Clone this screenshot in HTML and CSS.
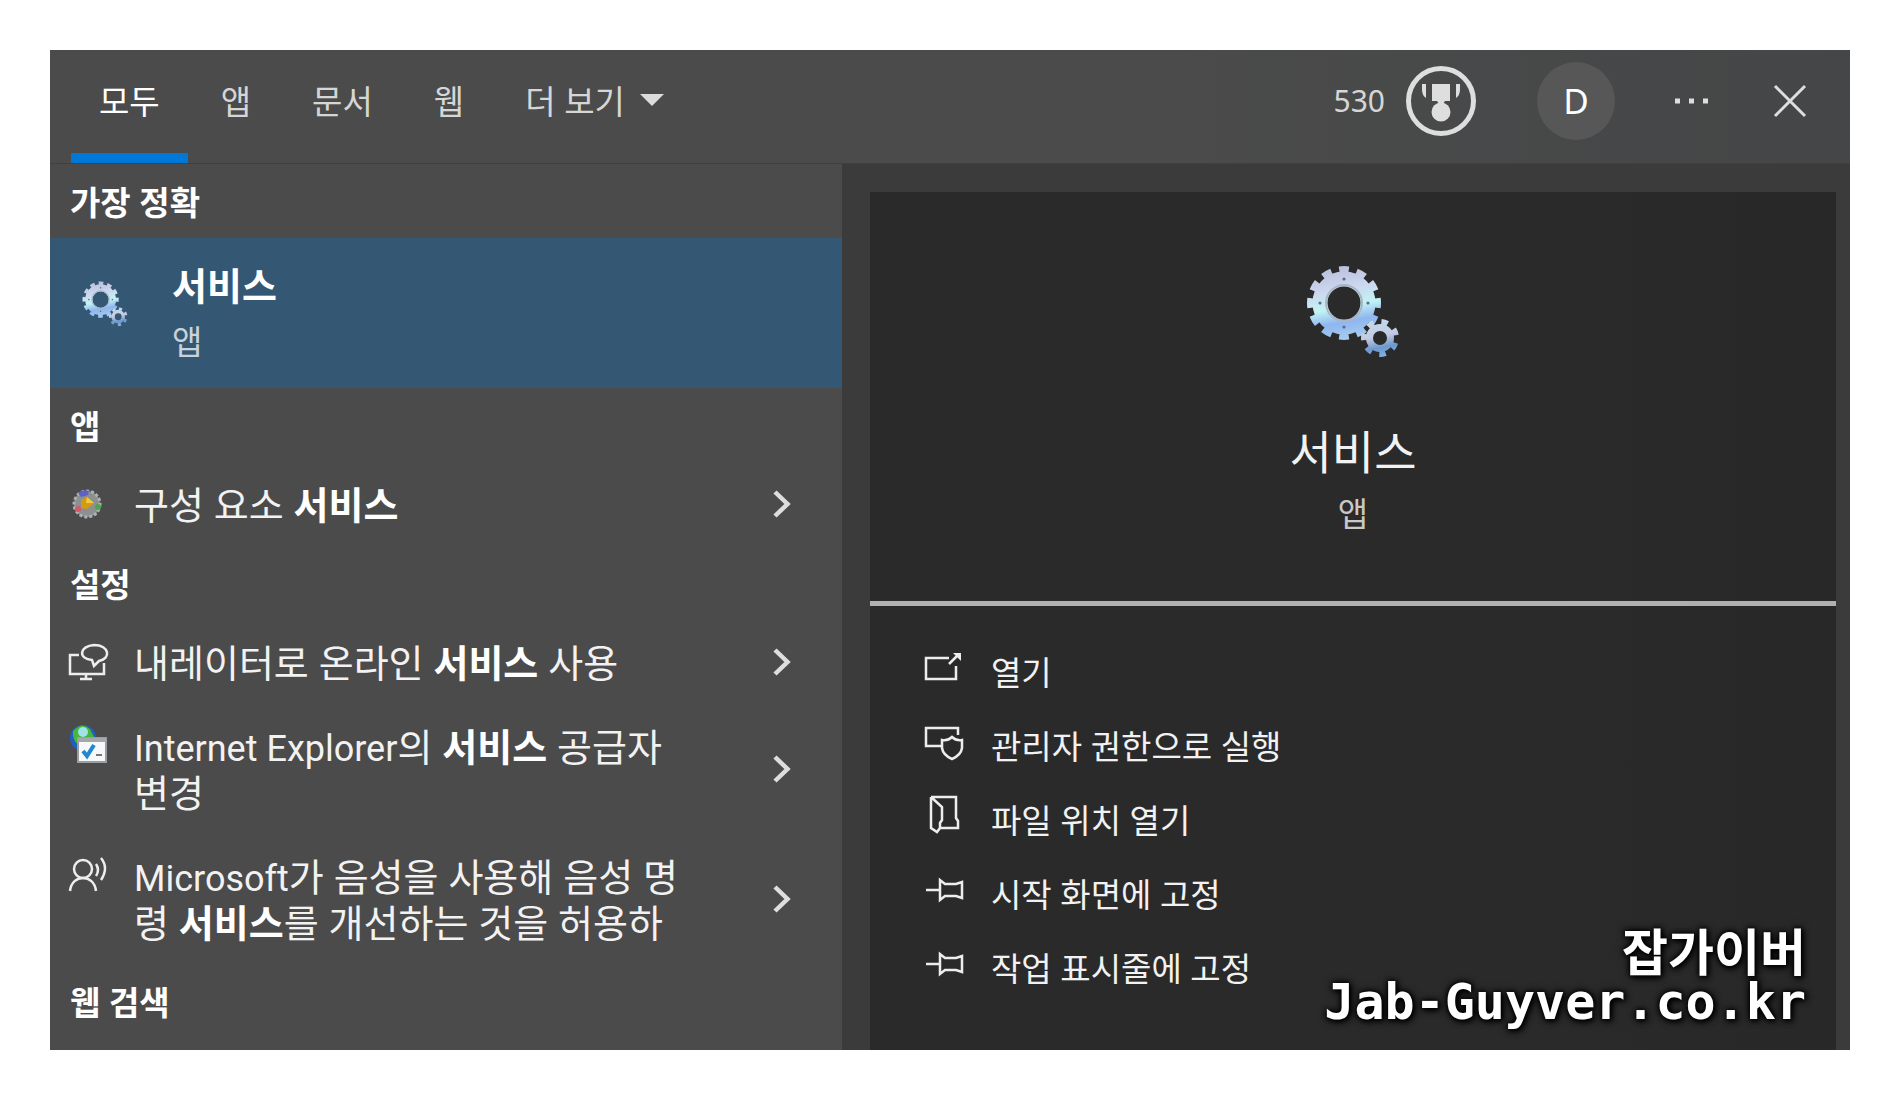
FILE: index.html
```html
<!DOCTYPE html>
<html lang="ko">
<head>
  <meta charset="UTF-8" />
  <title>서비스 - 검색</title>
  <link rel="stylesheet" href="styles.css">
</head>
<body>
  <svg class="defs" aria-hidden="true">
    <defs>
      <linearGradient id="gearFill" gradientUnits="userSpaceOnUse" x1="30" y1="0" x2="44" y2="74">
        <stop offset="0" stop-color="#b9bfdc" />
        <stop offset="0.3" stop-color="#ccd6ee" />
        <stop offset="0.55" stop-color="#c2f3f4" />
        <stop offset="0.75" stop-color="#8fb6f0" />
        <stop offset="1" stop-color="#a8cdee" />
      </linearGradient>
      <linearGradient id="gearSmall" gradientUnits="userSpaceOnUse" x1="70" y1="53" x2="78" y2="91">
        <stop offset="0" stop-color="#c3dcec" />
        <stop offset="0.45" stop-color="#c4cbe2" />
        <stop offset="0.75" stop-color="#6c98cc" />
        <stop offset="1" stop-color="#86b4e4" />
      </linearGradient>
      <symbol id="gears" viewBox="0 0 94 92">
        <g fill="none" stroke="url(#gearFill)">
          <circle cx="38" cy="37" r="24" stroke-width="15" />
          <circle cx="38" cy="37" r="33" stroke-width="8" pathLength="240" stroke-dasharray="11 9" stroke-dashoffset="5.500" />
        </g>
        <circle cx="38" cy="37" r="18" fill="none" stroke="#a9b6c4" stroke-width="2" />
        <g fill="#55708a">
          <circle cx="38" cy="13" r="1.600" />
          <circle cx="38" cy="61" r="1.600" />
          <circle cx="14" cy="37" r="1.600" />
          <circle cx="62" cy="37" r="1.600" />
        </g>
        <g fill="none" stroke="url(#gearSmall)">
          <circle cx="74" cy="72" r="10.500" stroke-width="7" />
          <circle cx="74" cy="72" r="16" stroke-width="6" pathLength="140" stroke-dasharray="9 11" stroke-dashoffset="13" />
        </g>
      </symbol>
      <symbol id="chevron" viewBox="0 0 20 30">
        <path d="M3 3 15.500 15 3 27" fill="none" stroke="#dedede" stroke-width="4.500" />
      </symbol>
      <symbol id="pin" viewBox="0 0 40 40">
        <path d="M1 20H15M15 10V30L20 26H31L37 28V12L31 14H20L15 10Z" fill="none" stroke="#ededed" stroke-width="2.500" />
      </symbol>
    </defs>
  </svg>

  <main class="search-panel">
    <header class="topbar">
      <nav class="tabs">
        <button type="button" class="tab active">모두</button>
        <button type="button" class="tab">앱</button>
        <button type="button" class="tab">문서</button>
        <button type="button" class="tab">웹</button>
        <button type="button" class="tab more">더 보기
          <svg class="caret" viewBox="0 0 26 14" aria-hidden="true"><path d="M1 1H25L13 13Z" fill="#dcdcdc" /></svg>
        </button>
      </nav>
      <div class="account">
        <button type="button" class="rewards">530
          <svg viewBox="0 0 72 72" aria-hidden="true">
            <circle cx="36" cy="36" r="32.500" fill="none" stroke="#dedede" stroke-width="5" />
            <path d="M27 19H45V36H40L38 39H34L32 36H27Z" fill="#dedede" />
            <circle cx="36" cy="47" r="9.500" fill="#dedede" />
            <path d="M17 19H21V33Q17 30 17 25ZM55 19H51V33Q55 30 55 25Z" fill="#dedede" />
          </svg>
        </button>
        <button type="button" class="avatar">D</button>
        <button type="button" class="icon-btn" aria-label="옵션">
          <svg viewBox="0 0 34 34" aria-hidden="true"><path d="M0 14.500H5V19.500H0ZM14 14.500H19V19.500H14ZM28 14.500H33V19.500H28Z" fill="#dedede" /></svg>
        </button>
        <button type="button" class="icon-btn close" aria-label="닫기">
          <svg viewBox="0 0 34 34" aria-hidden="true"><path d="M2 2 32 32M32 2 2 32" stroke="#dedede" stroke-width="3" /></svg>
        </button>
      </div>
    </header>

    <div class="content">
      <section class="results">
        <h2>가장 정확</h2>
        <a href="#" class="best">
          <svg class="best-icon" aria-hidden="true"><use href="#gears" /></svg>
          <span class="best-text"><b>서비스</b><small>앱</small></span>
        </a>

        <h2>앱</h2>
        <a href="#" class="row">
          <svg class="row-icon" viewBox="0 0 38 38" aria-hidden="true">
            <circle cx="17" cy="19" r="13" fill="#8d9090" />
            <circle cx="17" cy="19" r="13" fill="none" stroke="#aeb0b4" stroke-width="3" stroke-dasharray="3 2" />
            <path d="M8 8Q13 4 19 6L18 10L11 12Z" fill="#5c62c8" />
            <circle cx="28" cy="22" r="3" fill="#4da44f" />
            <circle cx="8" cy="24" r="3" fill="#d4586c" />
            <path d="M11 15 17 12 24 18 17 24 11 23Z" fill="#d69a12" />
            <path d="M17 12 24 18 16 18Z" fill="#f1cc42" />
          </svg>
          <span class="row-text">구성 요소 <b>서비스</b></span>
          <svg class="chevron" aria-hidden="true"><use href="#chevron" /></svg>
        </a>

        <h2>설정</h2>
        <a href="#" class="row">
          <svg class="row-icon" viewBox="0 0 38 38" fill="none" stroke="#ededed" stroke-width="2.500" aria-hidden="true">
            <path d="M9 12H0V31H34V20M16 31V36M10 36H22" />
            <path d="M22 17C8 16 9 3 24 2C40 2 41 16 29 18L24 23Z" />
          </svg>
          <span class="row-text">내레이터로 온라인 <b>서비스</b> 사용</span>
          <svg class="chevron" aria-hidden="true"><use href="#chevron" /></svg>
        </a>
        <a href="#" class="row">
          <svg class="row-icon top" viewBox="0 0 38 38" aria-hidden="true">
            <circle cx="13" cy="15" r="13" fill="#1e5fc4" />
            <path d="M3 8Q12 -2 20 6L24 14H12L8 22Q2 16 3 8Z" fill="#49b53b" />
            <circle cx="13" cy="9" r="5" fill="#9fe3ea" />
            <rect x="8" y="15" width="28" height="24" fill="#f6f8fa" stroke="#9a9da1" stroke-width="2" />
            <path d="M8 17H36" stroke="#a4a8ac" stroke-width="4" />
            <path d="M13 28 17 33 24 22" fill="none" stroke="#2387cf" stroke-width="4" />
            <path d="M26 32H32" stroke="#777" stroke-width="2" />
          </svg>
          <span class="row-text"><span lang="en">Internet Explorer</span>의 <b>서비스</b> 공급자 변경</span>
          <svg class="chevron" aria-hidden="true"><use href="#chevron" /></svg>
        </a>
        <a href="#" class="row">
          <svg class="row-icon top" viewBox="0 0 38 38" fill="none" stroke="#ededed" stroke-width="2.500" aria-hidden="true">
            <circle cx="13" cy="16" r="9" />
            <path d="M0 38C1 29 7 25 13 25S25 29 26 38M26 11Q30 17 26 23M31 5Q39 15 31 27" />
          </svg>
          <span class="row-text"><span lang="en">Microsoft</span>가 음성을 사용해 음성 명령 <b>서비스</b>를 개선하는 것을 허용하</span>
          <svg class="chevron" aria-hidden="true"><use href="#chevron" /></svg>
        </a>

        <h2>웹 검색</h2>
      </section>

      <section class="preview">
        <div class="card">
          <div class="summary">
            <svg class="summary-icon" aria-hidden="true"><use href="#gears" /></svg>
            <h1>서비스</h1>
            <p>앱</p>
          </div>
          <ul class="actions">
            <li><a href="#">
              <svg viewBox="0 0 40 40" aria-hidden="true" fill="none" stroke="#ededed" stroke-width="2.500">
                <path d="M24 10H1V31H31V18M24 16 33 7" /><path d="M28 5H36V13Z" fill="#ededed" stroke="none" />
              </svg>열기</a></li>
            <li><a href="#">
              <svg viewBox="0 0 40 40" aria-hidden="true" fill="none" stroke="#ededed" stroke-width="2.500">
                <path d="M16 24H1V6H33V13" /><path d="M27 15Q31 19 37 18V26Q36 33 27 37Q18 33 17 26V18Q23 19 27 15Z" />
              </svg>관리자 권한으로 실행</a></li>
            <li><a href="#">
              <svg viewBox="0 0 40 40" aria-hidden="true" fill="none" stroke="#ededed" stroke-width="2.500">
                <path d="M6 1H31V22L33 25V32H15M6 1V32L12 36L15 32V27L17 24V11L6 1" />
              </svg>파일 위치 열기</a></li>
            <li><a href="#"><svg aria-hidden="true"><use href="#pin" /></svg>시작 화면에 고정</a></li>
            <li><a href="#"><svg aria-hidden="true"><use href="#pin" /></svg>작업 표시줄에 고정</a></li>
          </ul>
        </div>
      </section>
    </div>

    <div class="watermark">잡가이버<br>Jab-Guyver.co.kr</div>
  </main>
</body>
</html>
```
FILE: styles.css
```css
* { box-sizing: border-box; }
body {
  margin: 0;
  padding: 50px;
  background: #fff;
  color: #f2f2f2;
  font-family: "Noto Sans", "Noto Sans CJK KR", sans-serif;
  font-size: 33px;
}
h1, h2, p, ul { margin: 0; padding: 0; }
ul { list-style: none; }
a { color: inherit; text-decoration: none; }
button { background: none; border: 0; padding: 0; color: inherit; font: inherit; cursor: pointer; }
svg { display: block; flex: none; overflow: visible; }
.defs { position: absolute; width: 0; height: 0; }

.search-panel {
  position: relative;
  display: flex;
  flex-direction: column;
  min-height: calc(100vh - 100px);
  background: #4b4b4b;
}

/* top bar */
.topbar {
  display: flex;
  justify-content: space-between;
  height: 114px;
  padding: 0 43px 0 21px;
  border-bottom: 1px solid #404040;
  background: linear-gradient(90deg, #4b4b4b 60%, #444647);
}
.tabs { display: flex; gap: 5px; }
.tab {
  display: flex;
  align-items: center;
  gap: 14px;
  padding: 0 28px 4px;
  border-bottom: 10px solid transparent;
  color: #d6d6d6;
}
.tab.active { color: #fff; border-bottom-color: #0078d7; }
.caret { width: 26px; height: 14px; }
.account { display: flex; align-items: center; padding-bottom: 12px; }
.rewards { display: flex; align-items: center; gap: 20px; color: #d6d6d6; font-size: 30px; }
.rewards svg { width: 72px; height: 72px; }
.avatar {
  width: 78px;
  height: 78px;
  margin: 0 60px;
  border-radius: 50%;
  background: #575757;
  color: #fff;
  font-size: 35px;
}
.icon-btn svg { width: 34px; height: 34px; }
.close { margin-left: 64px; }

/* left list */
.content { display: flex; flex: 1; }
.results { flex: 0 0 44%; padding-bottom: 8px; }
.results h2 {
  padding: 4px 20px 0;
  font-size: 33px;
  line-height: 70px;
  color: #fff;
}
.best {
  display: flex;
  align-items: center;
  gap: 44px;
  height: 150px;
  padding: 0 32px;
  background: #345873;
}
.best-icon { width: 46px; height: 46px; margin-bottom: 18px; }
.best-text { display: flex; flex-direction: column; }
.best-text b { font-size: 38px; line-height: 58px; color: #fff; }
.best-text small { font-size: 33px; line-height: 56px; color: #c8d2da; }
.row {
  display: flex;
  align-items: center;
  padding: 19px 50px 19px 20px;
  font-size: 38px;
  line-height: 46px;
}
.row-icon { width: 38px; height: 38px; margin-right: 26px; }
.row-icon.top { align-self: flex-start; }
.row-text { flex: 1; margin-right: 76px; word-break: break-all; }
.row-text [lang="en"] { font-family: Roboto, sans-serif; font-size: 36px; line-height: 1; }
.row b { color: #fff; }
.chevron { width: 20px; height: 30px; }

/* right preview */
.preview {
  flex: 1;
  display: flex;
  padding: 28px 14px 0 28px;
  background: #3b3b3b;
}
.card { flex: 1; background: linear-gradient(90deg, #2a2a2a 70%, #292828); }
.summary {
  display: flex;
  flex-direction: column;
  align-items: center;
  padding: 74px 0 57px;
  border-bottom: 5px solid #b0b0b0;
}
.summary-icon { width: 94px; height: 92px; margin-bottom: 60px; }
.summary h1 { font-size: 46px; font-weight: 400; line-height: 66px; }
.summary p { line-height: 60px; color: #c8c8c8; }
.actions { padding: 30px 0 20px 55px; }
.actions a { display: flex; align-items: center; line-height: 74px; }
.actions svg { width: 40px; height: 40px; margin: 0 26px 10px 0; }

.watermark {
  position: absolute;
  right: 44px;
  bottom: 24px;
  color: #fff;
  font: bold 50px/48px "DejaVu Sans Mono", "Noto Sans CJK KR", monospace;
  text-align: right;
  text-shadow: 0 0 4px #000, 0 0 8px #000, 2px 2px 6px #000;
}
```
